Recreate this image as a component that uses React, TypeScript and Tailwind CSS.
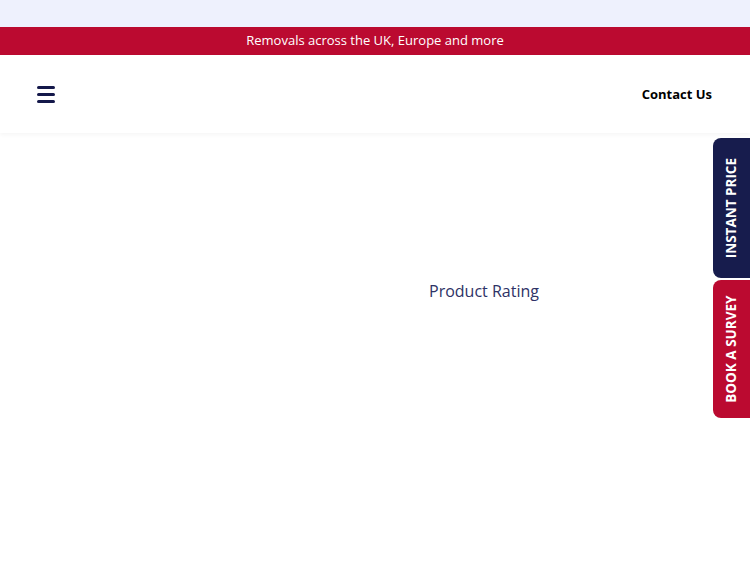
export default function App() {
  return (
    <div className="relative w-[750px] h-[563px] overflow-hidden bg-white" style={{ fontFamily: '"Open Sans", Lato, sans-serif' }}>
      <div className="h-[27px] bg-[#eef1fd]" />
      <div className="h-[28px] bg-[#bb0a30] flex items-center justify-center text-white text-[13px]">
        Removals across the UK, Europe and more
      </div>
      <header className="h-[78px] bg-white flex items-center justify-between pl-[37px] pr-[38px] pt-[2px] shadow-[0_2px_4px_rgba(0,0,0,0.04)]">
        <div className="flex flex-col gap-[4px] w-[18px] mt-[-2px]">
          <span className="block h-[3px] bg-[#14184a] rounded-sm" />
          <span className="block h-[3px] bg-[#14184a] rounded-sm" />
          <span className="block h-[3px] bg-[#14184a] rounded-sm" />
        </div>
        <span className="text-[13px] font-bold text-black">Contact Us</span>
      </header>
      <main className="flex justify-center pt-[146px] pl-[218px]">
        <span className="text-[16px] text-[#2e3266]">Product Rating</span>
      </main>
      <div className="absolute right-0 top-[138px] flex flex-col gap-[2px]">
        <div className="w-[37px] h-[140px] bg-[#171c4d] rounded-l-[8px] flex items-center justify-center">
          <span className="text-white font-bold text-[13.5px] whitespace-nowrap -rotate-90">INSTANT PRICE</span>
        </div>
        <div className="w-[37px] h-[138px] bg-[#bb0a30] rounded-l-[8px] flex items-center justify-center">
          <span className="text-white font-bold text-[13.5px] whitespace-nowrap -rotate-90">BOOK A SURVEY</span>
        </div>
      </div>
    </div>
  );
}
